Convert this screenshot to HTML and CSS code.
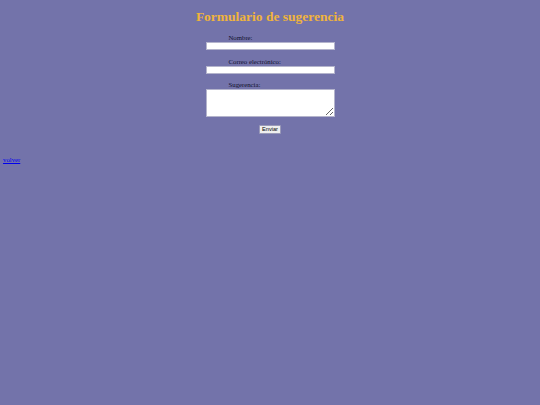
FILE: index.html
```html
<!DOCTYPE html>
<html lang="es">
<head>
<meta charset="utf-8">
<title>Formulario de sugerencia</title>
<link rel="stylesheet" href="styles.css">
</head>
<body>
<div class="page">
  <h1 class="title">Formulario de sugerencia</h1>
  <form class="form">
    <div class="field">
      <label class="label" for="nombre">Nombre:</label>
      <input class="input" id="nombre" type="text">
    </div>
    <div class="field">
      <label class="label" for="correo">Correo electrónico:</label>
      <input class="input" id="correo" type="email">
    </div>
    <div class="field">
      <label class="label" for="sugerencia">Sugerencia:</label>
      <textarea class="textarea" id="sugerencia"></textarea>
    </div>
    <button class="button" type="submit">Enviar</button>
  </form>
  <a class="back" href="#">volver</a>
</div>
</body>
</html>
```
FILE: styles.css
```css
html, body {
  margin: 0;
  padding: 0;
  background: #7373aa;
}
.page {
  display: flex;
  flex-direction: column;
  min-height: 405px;
  font-family: "Liberation Serif", "Times New Roman", serif;
  font-size: 6.75px;
  color: #10102a;
}
.title {
  margin: 9px 0 0;
  text-align: center;
  font-size: 13.5px;
  line-height: 16px;
  font-weight: bold;
  color: #f0b43c;
}
.form {
  margin-top: 9px;
  display: flex;
  flex-direction: column;
  align-items: center;
}
.field {
  width: 129px;
  display: flex;
  flex-direction: column;
  margin-bottom: 7.5px;
}
.label {
  padding-left: 23px;
  line-height: 8px;
  height: 8px;
}
.input {
  box-sizing: border-box;
  width: 129px;
  height: 8px;
  margin: 0;
  padding: 0;
  background: #fff;
  border: 1px solid #b4b4cc;
}
.textarea {
  box-sizing: border-box;
  width: 129px;
  height: 28px;
  margin: 0;
  padding: 0;
  background: #fff;
  border: 1px solid #b4b4cc;
  resize: vertical;
}
.button {
  box-sizing: border-box;
  width: 22px;
  height: 9px;
  margin: 0;
  padding: 0;
  font-family: "Liberation Sans", Arial, sans-serif;
  font-size: 5.6px;
  line-height: 7px;
  color: #000;
  background: #efefef;
  border: 1px solid #9a9ab8;
  border-radius: 1px;
}
.back {
  align-self: flex-start;
  margin: 22px 0 0 3px;
  line-height: 8px;
  color: #0000ee;
}
```
